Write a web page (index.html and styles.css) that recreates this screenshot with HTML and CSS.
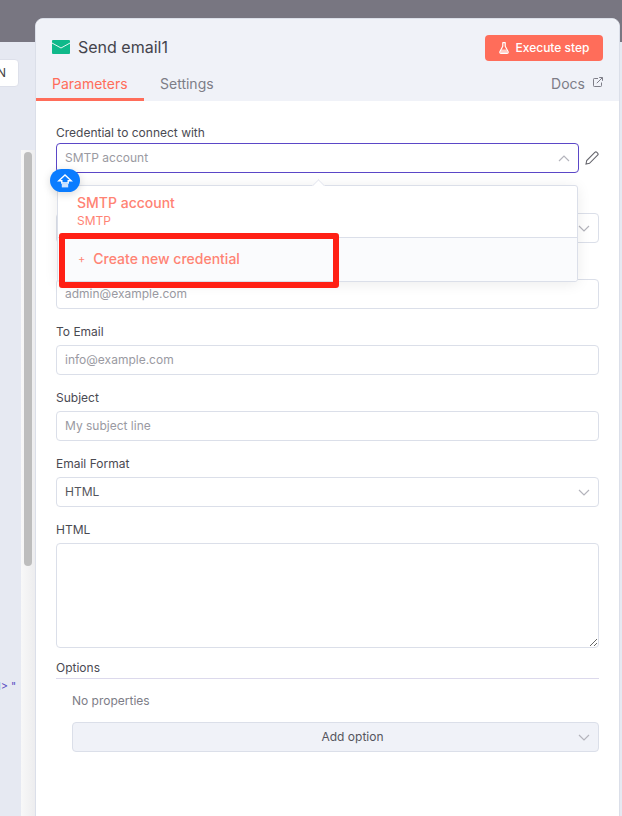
FILE: index.html
```html
<!DOCTYPE html>
<html lang="en">
<head>
<meta charset="utf-8">
<title>Send email1</title>
<link rel="stylesheet" href="styles.css">
</head>
<body>
<div class="backdrop">
  <div class="top-dim"></div>
  <div class="canvas">
    <div class="canvas-btn">N</div>
    <div class="canvas-code">d&gt; "</div>
    <div class="side-strip"><div class="scroll-thumb"></div></div>
  </div>
</div>

<section class="panel">
  <header class="panel-head">
    <div class="title-row">
      <div class="title">
        <svg class="mail-icon" width="18" height="14" viewBox="0 0 18 14"><rect fill="#0fb98a" width="18" height="14" rx="1"/><path fill="none" stroke="#e6f7f1" stroke-width="1" d="M0 3l9 5 9-5"/></svg>
        <span>Send email1</span>
      </div>
      <button class="exec-btn">
        <svg width="10" height="12" viewBox="0 0 10 12"><path fill="none" stroke="#fff" stroke-width="1.2" d="M3.5.6h3M3.8.6v3.6L1 9.6c-.5 1 .1 1.8 1 1.8h6c.9 0 1.5-.8 1-1.8L6.200 4.200V.6"/><path fill="#fff" fill-opacity=".65" d="M2.600 7.500h4.800l1.300 2.800-.5.600H1.800l-.5-.6z"/></svg>
        <span>Execute step</span>
      </button>
    </div>
    <nav class="tabs">
      <div class="tab tab-active">Parameters</div>
      <div class="tab">Settings</div>
      <div class="docs">
        <span>Docs</span>
        <svg width="10" height="10" viewBox="0 0 10 10" fill="none" stroke="#7d7d87" stroke-width="1"><path d="M5 1.500H1.300a.8.800 0 0 0-.8.800v6.400a.8.800 0 0 0 .8.800h6.400a.8.800 0 0 0 .8-.8V5.500"/><path d="M3.800 6.200L9.300.7M6.200.5h3.300v3.300"/></svg>
      </div>
    </nav>
  </header>

  <div class="panel-body">
    <div class="field field-cred">
      <label class="label label-cred">Credential to connect with</label>
      <div class="cred-row">
        <div class="input input-focus">
          <span class="ph">SMTP account</span>
          <svg class="chev" width="12" height="7" viewBox="0 0 12 7"><path fill="none" stroke="#b4b4bc" stroke-width="1.200" d="M1 6l5-5 5 5"/></svg>
        </div>
        <svg class="pencil" width="14" height="14" viewBox="0 0 14 14" fill="none" stroke="#66666e" stroke-width="1.100"><path d="M1 13l.7-3.500L9.800 1.400a1.500 1.500 0 0 1 2.100 0l.7.700a1.500 1.500 0 0 1 0 2.100L4.500 12.300z"/></svg>
      </div>
    </div>

    <div class="field">
      <div class="input">
        <span class="ph"></span>
        <svg class="chev" width="12" height="7" viewBox="0 0 12 7"><path fill="none" stroke="#b4b4bc" stroke-width="1.200" d="M1 1l5 5 5-5"/></svg>
      </div>
    </div>
    <div class="field">
      <div class="label"></div>
      <div class="input"><span class="ph">admin@example.com</span></div>
    </div>
    <div class="field">
      <label class="label">To Email</label>
      <div class="input"><span class="ph">info@example.com</span></div>
    </div>
    <div class="field">
      <label class="label">Subject</label>
      <div class="input"><span class="ph">My subject line</span></div>
    </div>
    <div class="field">
      <label class="label">Email Format</label>
      <div class="input">
        <span class="val">HTML</span>
        <svg class="chev" width="12" height="7" viewBox="0 0 12 7"><path fill="none" stroke="#b4b4bc" stroke-width="1.200" d="M1 1l5 5 5-5"/></svg>
      </div>
    </div>
    <div class="field">
      <label class="label">HTML</label>
      <textarea class="area"></textarea>
    </div>
    <div class="options">
      <div class="options-title">Options</div>
      <div class="options-body">
        <div class="no-props">No properties</div>
        <div class="add-option">
          <span>Add option</span>
          <svg class="chev chev-abs" width="12" height="7" viewBox="0 0 12 7"><path fill="none" stroke="#b4b4bc" stroke-width="1.200" d="M1 1l5 5 5-5"/></svg>
        </div>
      </div>
    </div>
  </div>

  <div class="dropdown">
    <div class="caret"></div>
    <div class="dd-item">
      <div class="dd-name">SMTP account</div>
      <div class="dd-type">SMTP</div>
    </div>
    <div class="dd-create"><span class="plus">+</span><span>Create new credential</span></div>
  </div>
  <div class="red-box"></div>
  <div class="badge">
    <svg width="16" height="14" viewBox="0 0 16 14"><path fill="none" stroke="#fff" stroke-width="1.400" d="M8 1L1.800 6.800h3V9h6.400V6.800h3z"/><path fill="#cfe4ff" d="M4.800 10h6.400v3.400H4.800z"/></svg>
  </div>
</section>
</body>
</html>
```

FILE: styles.css
```css
* { box-sizing: border-box; }
html, body { margin: 0; height: 100%; }
body {
  width: 622px;
  height: 816px;
  overflow: hidden;
  position: relative;
  font-family: Inter, "Liberation Sans", sans-serif;
  background: #e6e9f2;
  color: #555;
}
.backdrop { height: 100%; display: flex; flex-direction: column; }
.top-dim { height: 42px; background: #787681; flex: none; }
.canvas { flex: 1; position: relative; }
.canvas-btn {
  position: absolute; left: -14px; top: 17px;
  width: 33px; height: 28px;
  background: #fff; border: 1px solid #dde0ea; border-radius: 4px;
  font-size: 12px; color: #444; text-align: right; padding: 6px 12px 0 0; line-height: 14px;
}
.canvas-code { position: absolute; left: -6px; top: 637px; font-size: 11px; color: #5b4fc4; line-height: 14px; }
.side-strip { position: absolute; left: 21px; top: 108px; bottom: 0; width: 15px; background: linear-gradient(90deg, #f8f8f8, #ececee); }
.scroll-thumb { position: absolute; left: 3px; top: 2px; width: 8px; height: 414px; border-radius: 4px; background: #bdbdbd; }

.panel {
  position: absolute; left: 35px; top: 18px;
  width: 585px; height: 820px;
  background: #fff;
  border: 1px solid #dbdfe9;
  border-radius: 8px 8px 0 0;
  display: flex; flex-direction: column;
}
.panel-head { height: 82px; background: #f0f2f8; border-radius: 8px 8px 0 0; flex: none; display: flex; flex-direction: column; }
.title-row { display: flex; justify-content: space-between; align-items: center; padding: 12px 16px 0 16px; height: 45px; flex: none; }
.title { display: flex; align-items: center; gap: 8px; font-size: 16px; line-height: 24px; color: #44444c; margin-top: -2px; }
.mail-icon { display: block; }
.exec-btn {
  height: 26px; width: 118px; border: 0; border-radius: 4px; background: #ff6d5a; color: #fff;
  font: 500 12px/16px Inter, "Liberation Sans", sans-serif;
  display: flex; align-items: center; justify-content: center; gap: 7px; padding: 0;
}
.tabs { flex: 1; display: flex; align-items: stretch; font-size: 14px; color: #7d7d87; position: relative; }
.tab { padding: 11px 16px 0; line-height: 17px; }
.tab-active { color: #ff6d5a; border-bottom: 3px solid #ff6d5a; width: 108px; }
.docs { margin-left: auto; padding: 11px 16px 0 0; display: flex; gap: 8px; line-height: 17px; }
.docs svg { margin-top: 2px; }

.panel-body { padding: 24px 20px 0 20px; display: flex; flex-direction: column; }
.field { display: flex; flex-direction: column; }
.field + .field { margin-top: 14px; }
.field-cred { margin-bottom: 26px; }
.label { font-size: 12px; line-height: 18px; color: #4a4a52; height: 18px; margin-bottom: 4px; }
.label-cred { line-height: 16px; margin-bottom: 0; }
.cred-row { display: flex; align-items: center; gap: 6px; }
.cred-row .input { flex: 1; }
.pencil { width: 14px; flex: none; }
.input {
  height: 30px; width: 100%; border: 1px solid #dbdfe9; border-radius: 4px; background: #fff;
  display: flex; align-items: center; justify-content: space-between;
  padding: 0 8px 0 8px; font-size: 12px; line-height: 16px;
}
.input-focus { border-color: #5b47c7; width: auto; }
.ph { color: #9a9aa2; }
.val { color: #55555d; }
.chev { display: block; flex: none; }
.area {
  display: block; width: 100%; height: 105px; border: 1px solid #dbdfe9; border-radius: 4px; background: #fff;
  resize: vertical; margin: 0; padding: 8px; font: 12px Inter, sans-serif; outline: 0;
}
.options { margin-top: 11px; }
.options-title { font-size: 12px; line-height: 18px; color: #4a4a52; border-bottom: 1px solid #dcd9ec; height: 20px; }
.options-body { padding: 13px 0 0 16px; }
.no-props { font-size: 12px; line-height: 18px; color: #7d7d87; }
.add-option {
  margin-top: 12px; height: 30px; background: #f0f2f8; border: 1px solid #dbdfe9; border-radius: 4px;
  display: flex; align-items: center; justify-content: center; padding: 0 0 2px 34px; font-size: 12px; color: #55555d; position: relative;
}
.chev-abs { position: absolute; right: 8px; top: 11px; }

.dropdown {
  position: absolute; left: 21px; top: 166px; width: 521px; height: 97px;
  background: #fff; border: 1px solid #dbdfe9; border-radius: 3px;
  box-shadow: 0 2px 14px rgba(0, 0, 0, .08);
}
.caret {
  position: absolute; left: 256px; top: -5px; width: 9px; height: 9px; background: #fff;
  transform: rotate(45deg); border-left: 1px solid #e6e8f0; border-top: 1px solid #e6e8f0;
}
.dd-item { height: 52px; padding: 8px 19px 0; border-bottom: 1px solid #dbdfe9; color: #ff8374; }
.dd-name { font-size: 14px; font-weight: 500; line-height: 18px; }
.dd-type { font-size: 12px; line-height: 18px; }
.dd-create { height: 43px; background: #fafbfd; padding: 0 0 2px 20px; display: flex; align-items: center; gap: 8px; color: #ff8374; font-size: 14px; font-weight: 500; border-radius: 0 0 3px 3px; }
.plus { font-size: 11px; font-weight: 400; }
.red-box { position: absolute; left: 23px; top: 214px; width: 280px; height: 55px; border: 6px solid #ff2015; border-radius: 3px; }
.badge {
  position: absolute; left: 14px; top: 150px; width: 30px; height: 23px; border-radius: 12px; background: #0a7cff;
  display: flex; align-items: center; justify-content: center; box-shadow: 0 2px 8px rgba(0, 0, 0, .15);
}
```
